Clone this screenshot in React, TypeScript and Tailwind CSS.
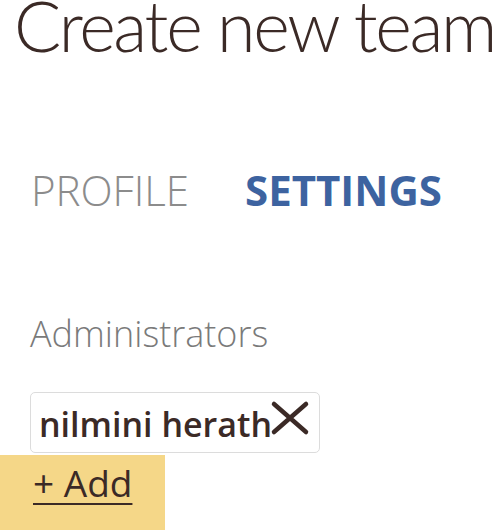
const font = { fontFamily: '"Open Sans", "Noto Sans", sans-serif' };

function CloseMark() {
  return (
    <svg width="40" height="36" viewBox="0 0 40 36" className="shrink-0">
      <path
        d="M4 4 L36 32 M36 4 L4 32"
        stroke="#3b2a26"
        strokeWidth="4.5"
        strokeLinecap="round"
        fill="none"
      />
    </svg>
  );
}

export default function App() {
  return (
    <main
      className="h-[530px] w-[500px] overflow-hidden bg-white text-[#3b2a26]"
      style={font}
    >
      <h1
        className="h-[50px] whitespace-nowrap pl-[14px] text-[70px] font-light leading-[50px] tracking-[-2.3px]"
        style={{ fontFamily: 'Lato, "Open Sans", sans-serif' }}
      >
        Create new team
      </h1>

      <nav className="mt-[110px] flex h-[60px] items-center gap-[56px] pl-[31px] text-[42px] leading-[60px]">
        <span className="font-light text-[#8c8c8c]">PROFILE</span>
        <span className="font-bold text-[#3d63a0]">SETTINGS</span>
      </nav>

      <section className="mt-[94px]">
        <h2 className="h-[40px] pl-[30px] text-[36px] font-light leading-[40px] text-[#7a7a7a]">
          Administrators
        </h2>

        <div className="ml-[30px] mt-[38px] flex h-[61px] w-[290px] items-center rounded-[5px] border border-[#dcdcdc] pl-[8px] pt-[2px]">
          <span className="whitespace-nowrap text-[34px] font-semibold leading-[40px]">
            nilmini herath
          </span>
          <div className="-ml-[2px] -mt-[12px]">
            <CloseMark />
          </div>
        </div>

        <button
          type="button"
          className="mt-[2px] flex h-[75px] w-[165px] items-start bg-[#f5d788] pl-[33px] pt-[8px] text-[37px] leading-[40px] text-[#3b2a26]"
        >
          <span className="underline decoration-2 underline-offset-[6px]">+ Add</span>
        </button>
      </section>
    </main>
  );
}
